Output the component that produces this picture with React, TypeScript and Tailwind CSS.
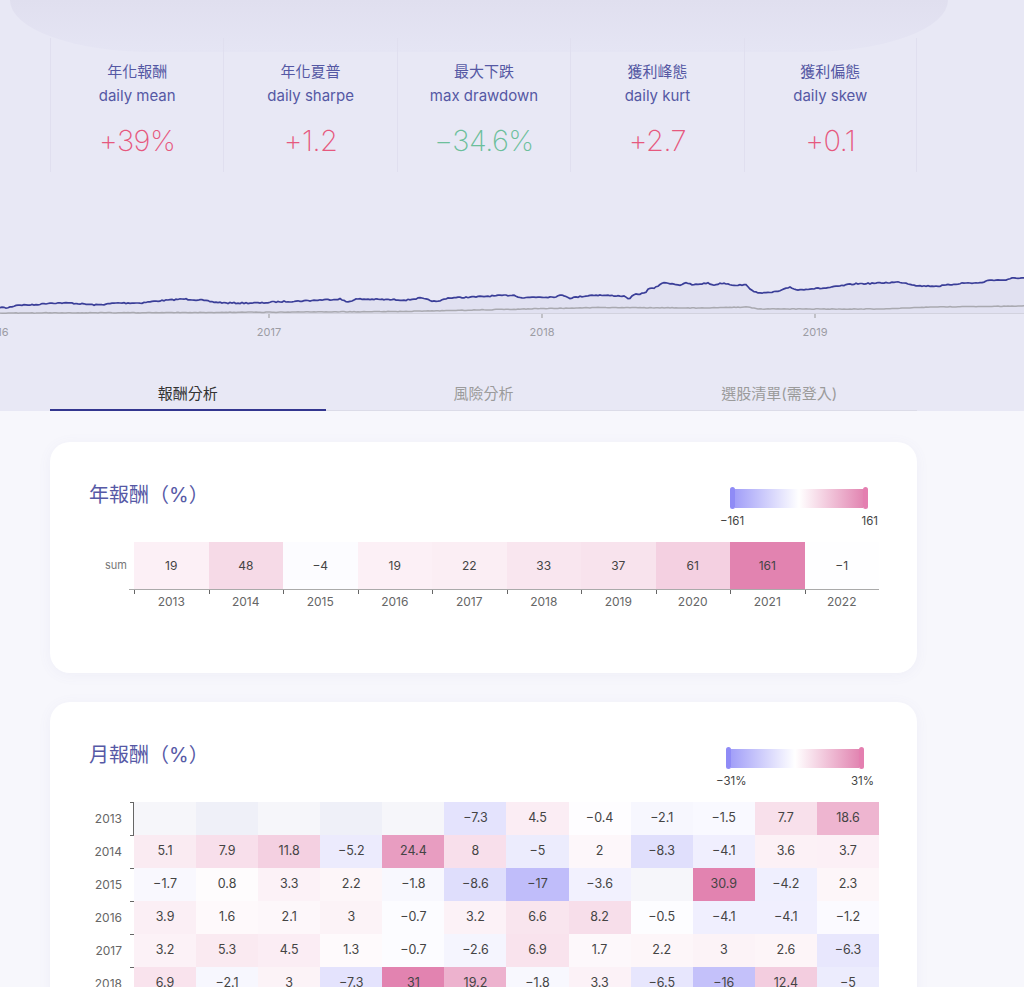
import React from "react";

const stats = [
  { zh: "年化報酬", en: "daily mean", value: "+39%", up: true },
  { zh: "年化夏普", en: "daily sharpe", value: "+1.2", up: true },
  { zh: "最大下跌", en: "max drawdown", value: "−34.6%", up: false },
  { zh: "獲利峰態", en: "daily kurt", value: "+2.7", up: true },
  { zh: "獲利偏態", en: "daily skew", value: "+0.1", up: true },
];

const tabs = ["報酬分析", "風險分析", "選股清單(需登入)"];

const annualYears = [2013, 2014, 2015, 2016, 2017, 2018, 2019, 2020, 2021, 2022];
const annual = [19, 48, -4, 19, 22, 33, 37, 61, 161, -1];

const monthly: { year: number; values: (number | null)[] }[] = [
  { year: 2013, values: [null, null, null, null, null, -7.3, 4.5, -0.4, -2.1, -1.5, 7.7, 18.6] },
  { year: 2014, values: [5.1, 7.9, 11.8, -5.2, 24.4, 8, -5, 2, -8.3, -4.1, 3.6, 3.7] },
  { year: 2015, values: [-1.7, 0.8, 3.3, 2.2, -1.8, -8.6, -17, -3.6, null, 30.9, -4.2, 2.3] },
  { year: 2016, values: [3.9, 1.6, 2.1, 3, -0.7, 3.2, 6.6, 8.2, -0.5, -4.1, -4.1, -1.2] },
  { year: 2017, values: [3.2, 5.3, 4.5, 1.3, -0.7, -2.6, 6.9, 1.7, 2.2, 3, 2.6, -6.3] },
  { year: 2018, values: [6.9, -2.1, 3, -7.3, 31, 19.2, -1.8, 3.3, -6.5, -16, 12.4, -5] },
];

// diverging scale: blue-violet -> white -> pink
function heat(v: number | null, max: number, idx: number) {
  if (v === null) return idx % 2 ? "#eff0f8" : "#f6f6fa";
  const t = Math.min(Math.abs(v) / max, 1);
  const end = v >= 0 ? [226, 131, 176] : [140, 135, 245];
  const c = end.map((e) => Math.round(255 + (e - 255) * t));
  return `rgb(${c[0]},${c[1]},${c[2]})`;
}

const fmt = (v: number | null) => (v === null ? "" : v < 0 ? `−${Math.abs(v)}` : `${v}`);

// ---- chart data ----
const blueKeys: [number, number][] = [
  [-2, 307], [7, 308], [17, 305], [33, 305], [50, 303], [70, 303], [97, 305], [117, 303],
  [140, 303], [157, 301], [183, 299], [200, 300], [213, 302], [227, 303], [240, 303],
  [263, 303], [273, 302], [300, 301], [340, 299], [347, 302], [357, 299], [407, 300],
  [420, 298], [437, 302], [447, 298], [473, 297], [513, 295], [523, 298], [533, 297],
  [553, 297], [563, 295], [570, 298], [593, 295], [623, 296], [630, 299], [633, 295],
  [645, 293], [648, 289], [655, 288], [662, 283], [668, 283], [680, 285], [687, 283],
  [693, 285], [707, 283], [713, 285], [723, 283], [733, 285], [747, 285], [753, 292],
  [767, 293], [780, 291], [790, 287], [797, 290], [807, 289], [827, 288], [853, 284],
  [880, 283], [900, 282], [920, 286], [940, 286], [963, 283], [980, 283], [990, 280],
  [1007, 280], [1013, 278], [1026, 278],
];

const grayKeys: [number, number][] = [
  [-2, 313], [200, 312.5], [400, 311.5], [600, 307.5], [700, 308], [747, 307],
  [760, 309], [880, 309], [930, 307], [1026, 306],
];

function rng(seed: number) {
  let s = seed;
  return () => {
    s = (s * 16807) % 2147483647;
    return s / 2147483647;
  };
}

function series(keys: [number, number][], seed: number, amp: number) {
  const r = rng(seed);
  const pts: [number, number][] = [];
  let k = 0;
  for (let x = -2; x <= 1026; x += 2) {
    while (k < keys.length - 2 && keys[k + 1][0] < x) k++;
    const [x0, y0] = keys[k];
    const [x1, y1] = keys[k + 1];
    const t = Math.max(0, Math.min(1, (x - x0) / (x1 - x0)));
    const y = y0 + (y1 - y0) * t + (r() - 0.5) * amp;
    pts.push([x, y - 172]);
  }
  return pts;
}

const bluePts = series(blueKeys, 7, 1.2);
const grayPts = series(grayKeys, 13, 0.5);
const toPath = (p: [number, number][]) =>
  p.map(([x, y], i) => `${i ? "L" : "M"}${x},${y.toFixed(1)}`).join(" ");
const bluePath = toPath(bluePts);
const grayPath = toPath(grayPts);
const areaPath = `${bluePath} L1026,141 L-2,141 Z`;

function Legend({ min, max }: { min: string; max: string }) {
  return (
    <div className="mt-[5px] w-[138px]">
      <div className="flex h-[22px] items-center">
        <div className="h-[22px] w-[5px] rounded-full bg-[#8f8bf6]" />
        <div className="h-[19px] flex-1 bg-[linear-gradient(to_right,#a29ff8,#ffffff_50%,#e286b2)]" />
        <div className="h-[22px] w-[5px] rounded-full bg-[#e47fb0]" />
      </div>
      <div className="-mx-[10px] mt-[5px] flex justify-between text-[11.5px] leading-[14px] text-[#444]">
        <span>{min}</span>
        <span>{max}</span>
      </div>
    </div>
  );
}

export default function App() {
  return (
    <div className="min-h-screen bg-[#f7f7fc] font-['Inter','Noto_Sans_CJK_TC',sans-serif]">
      {/* header band */}
      <div className="relative overflow-hidden bg-[#e8e8f5]">
        <div className="absolute left-[10px] top-0 h-[52px] w-[938px] rounded-bl-[150px_55px] rounded-br-[150px_55px] bg-[linear-gradient(to_bottom,#e0dfef,#e5e5f4)]" />

        <div className="relative ml-[50px] grid w-[867px] grid-cols-5 pt-[38px]">
          {stats.map((s, i) => (
            <div
              key={s.en}
              className={`flex h-[134px] flex-col items-center border-l border-[#e0dfef] pt-[22px] ${
                i === stats.length - 1 ? "border-r" : ""
              }`}
            >
              <div className="text-[15px] leading-[24px] text-[#5558a4]">{s.zh}</div>
              <div className="text-[15px] leading-[24px] text-[#5558a4]">{s.en}</div>
              <div
                className={`mt-[15px] text-[29px] font-extralight leading-[36px] tracking-[-0.5px] ${
                  s.up ? "text-[#e6587e]" : "text-[#6cbf9b]"
                }`}
              >
                {s.value}
              </div>
            </div>
          ))}
        </div>

        <svg width="1024" height="200" viewBox="0 0 1024 200" className="relative block">
          <path d={areaPath} fill="rgba(70,70,160,0.04)" />
          <line x1="0" y1="141.5" x2="1024" y2="141.5" stroke="#d2d2de" strokeWidth="1" />
          <path d={grayPath} fill="none" stroke="#a9a9b0" strokeWidth="1.5" />
          <path d={bluePath} fill="none" stroke="#3a3e98" strokeWidth="1.7" />
          {[-4, 269, 542, 815].map((x, i) => (
            <g key={x}>
              <line x1={x} y1="142" x2={x} y2="146" stroke="#999" strokeWidth="1" />
              <text x={x} y="164" textAnchor="middle" fontSize="11" fill="#9c9ca4" fontFamily="Inter">
                {2016 + i}
              </text>
            </g>
          ))}
        </svg>

        <div className="relative ml-[50px] flex h-[39px] w-[867px] gap-[20px] border-b border-[#dcdce8]">
          {tabs.map((t, i) => (
            <div
              key={t}
              className={`h-[39px] w-[276px] pt-[11px] text-center text-[15px] leading-[22px] ${
                i === 0 ? "border-b-2 border-[#33368f] text-[#333]" : "text-[#9b9b9b]"
              }`}
            >
              {t}
            </div>
          ))}
        </div>
      </div>

      {/* cards */}
      <div className="ml-[50px] flex w-[867px] flex-col gap-[29px] pb-10 pt-[31px]">
        <div className="h-[231px] rounded-[20px] bg-white shadow-[0_2px_14px_rgba(110,110,170,0.06)]">
          <div className="flex items-start justify-between pl-[39px] pr-[49px] pt-[40px]">
            <div className="text-[20px] leading-[26px] text-[#5659a6]">年報酬（%）</div>
            <Legend min="−161" max="161" />
          </div>
          <div className="mt-[14px] flex">
            <div className="flex h-[47px] w-[84px] items-center justify-end pr-[7px] text-[11px] text-[#777]">
              sum
            </div>
            <div>
              <div className="grid h-[47px] w-[745px] grid-cols-10">
                {annual.map((v, i) => (
                  <div
                    key={i}
                    className="flex items-center justify-center text-[12px] text-[#444]"
                    style={{ backgroundColor: heat(v, 161, i) }}
                  >
                    {fmt(v)}
                  </div>
                ))}
              </div>
              <div className="-ml-[5px] w-[750px] border-t-[1.5px] border-[#aaa]" />
              <div className="grid w-[745px] grid-cols-10">
                {annualYears.map((y) => (
                  <div key={y} className="flex flex-col">
                    <div className="h-[4px] border-l border-[#666]" />
                    <div className="mt-[1px] text-center text-[12px] leading-[14px] text-[#666]">{y}</div>
                  </div>
                ))}
              </div>
            </div>
          </div>
        </div>

        <div className="rounded-[20px] bg-white pb-10 shadow-[0_2px_14px_rgba(110,110,170,0.06)]">
          <div className="flex items-start justify-between pl-[39px] pr-[53px] pt-[40px]">
            <div className="text-[20px] leading-[26px] text-[#5659a6]">月報酬（%）</div>
            <Legend min="−31%" max="31%" />
          </div>
          <div className="mt-[14px] flex flex-col">
            {monthly.map((row, ri) => (
              <div key={row.year} className="flex h-[33px]">
                <div className="flex w-[80px] items-center justify-end pr-[8px] text-[12px] text-[#666]">
                  {row.year}
                </div>
                <div className={`w-[4px] border-t border-[#666] ${ri === 0 ? "border-r" : ""}`} />
                <div className="grid w-[745px] grid-cols-12">
                  {row.values.map((v, i) => (
                    <div
                      key={i}
                      className="flex items-center justify-center text-[12.5px] text-[#444]"
                      style={{ backgroundColor: heat(v, 31, i) }}
                    >
                      {fmt(v)}
                    </div>
                  ))}
                </div>
              </div>
            ))}
          </div>
        </div>
      </div>
    </div>
  );
}
